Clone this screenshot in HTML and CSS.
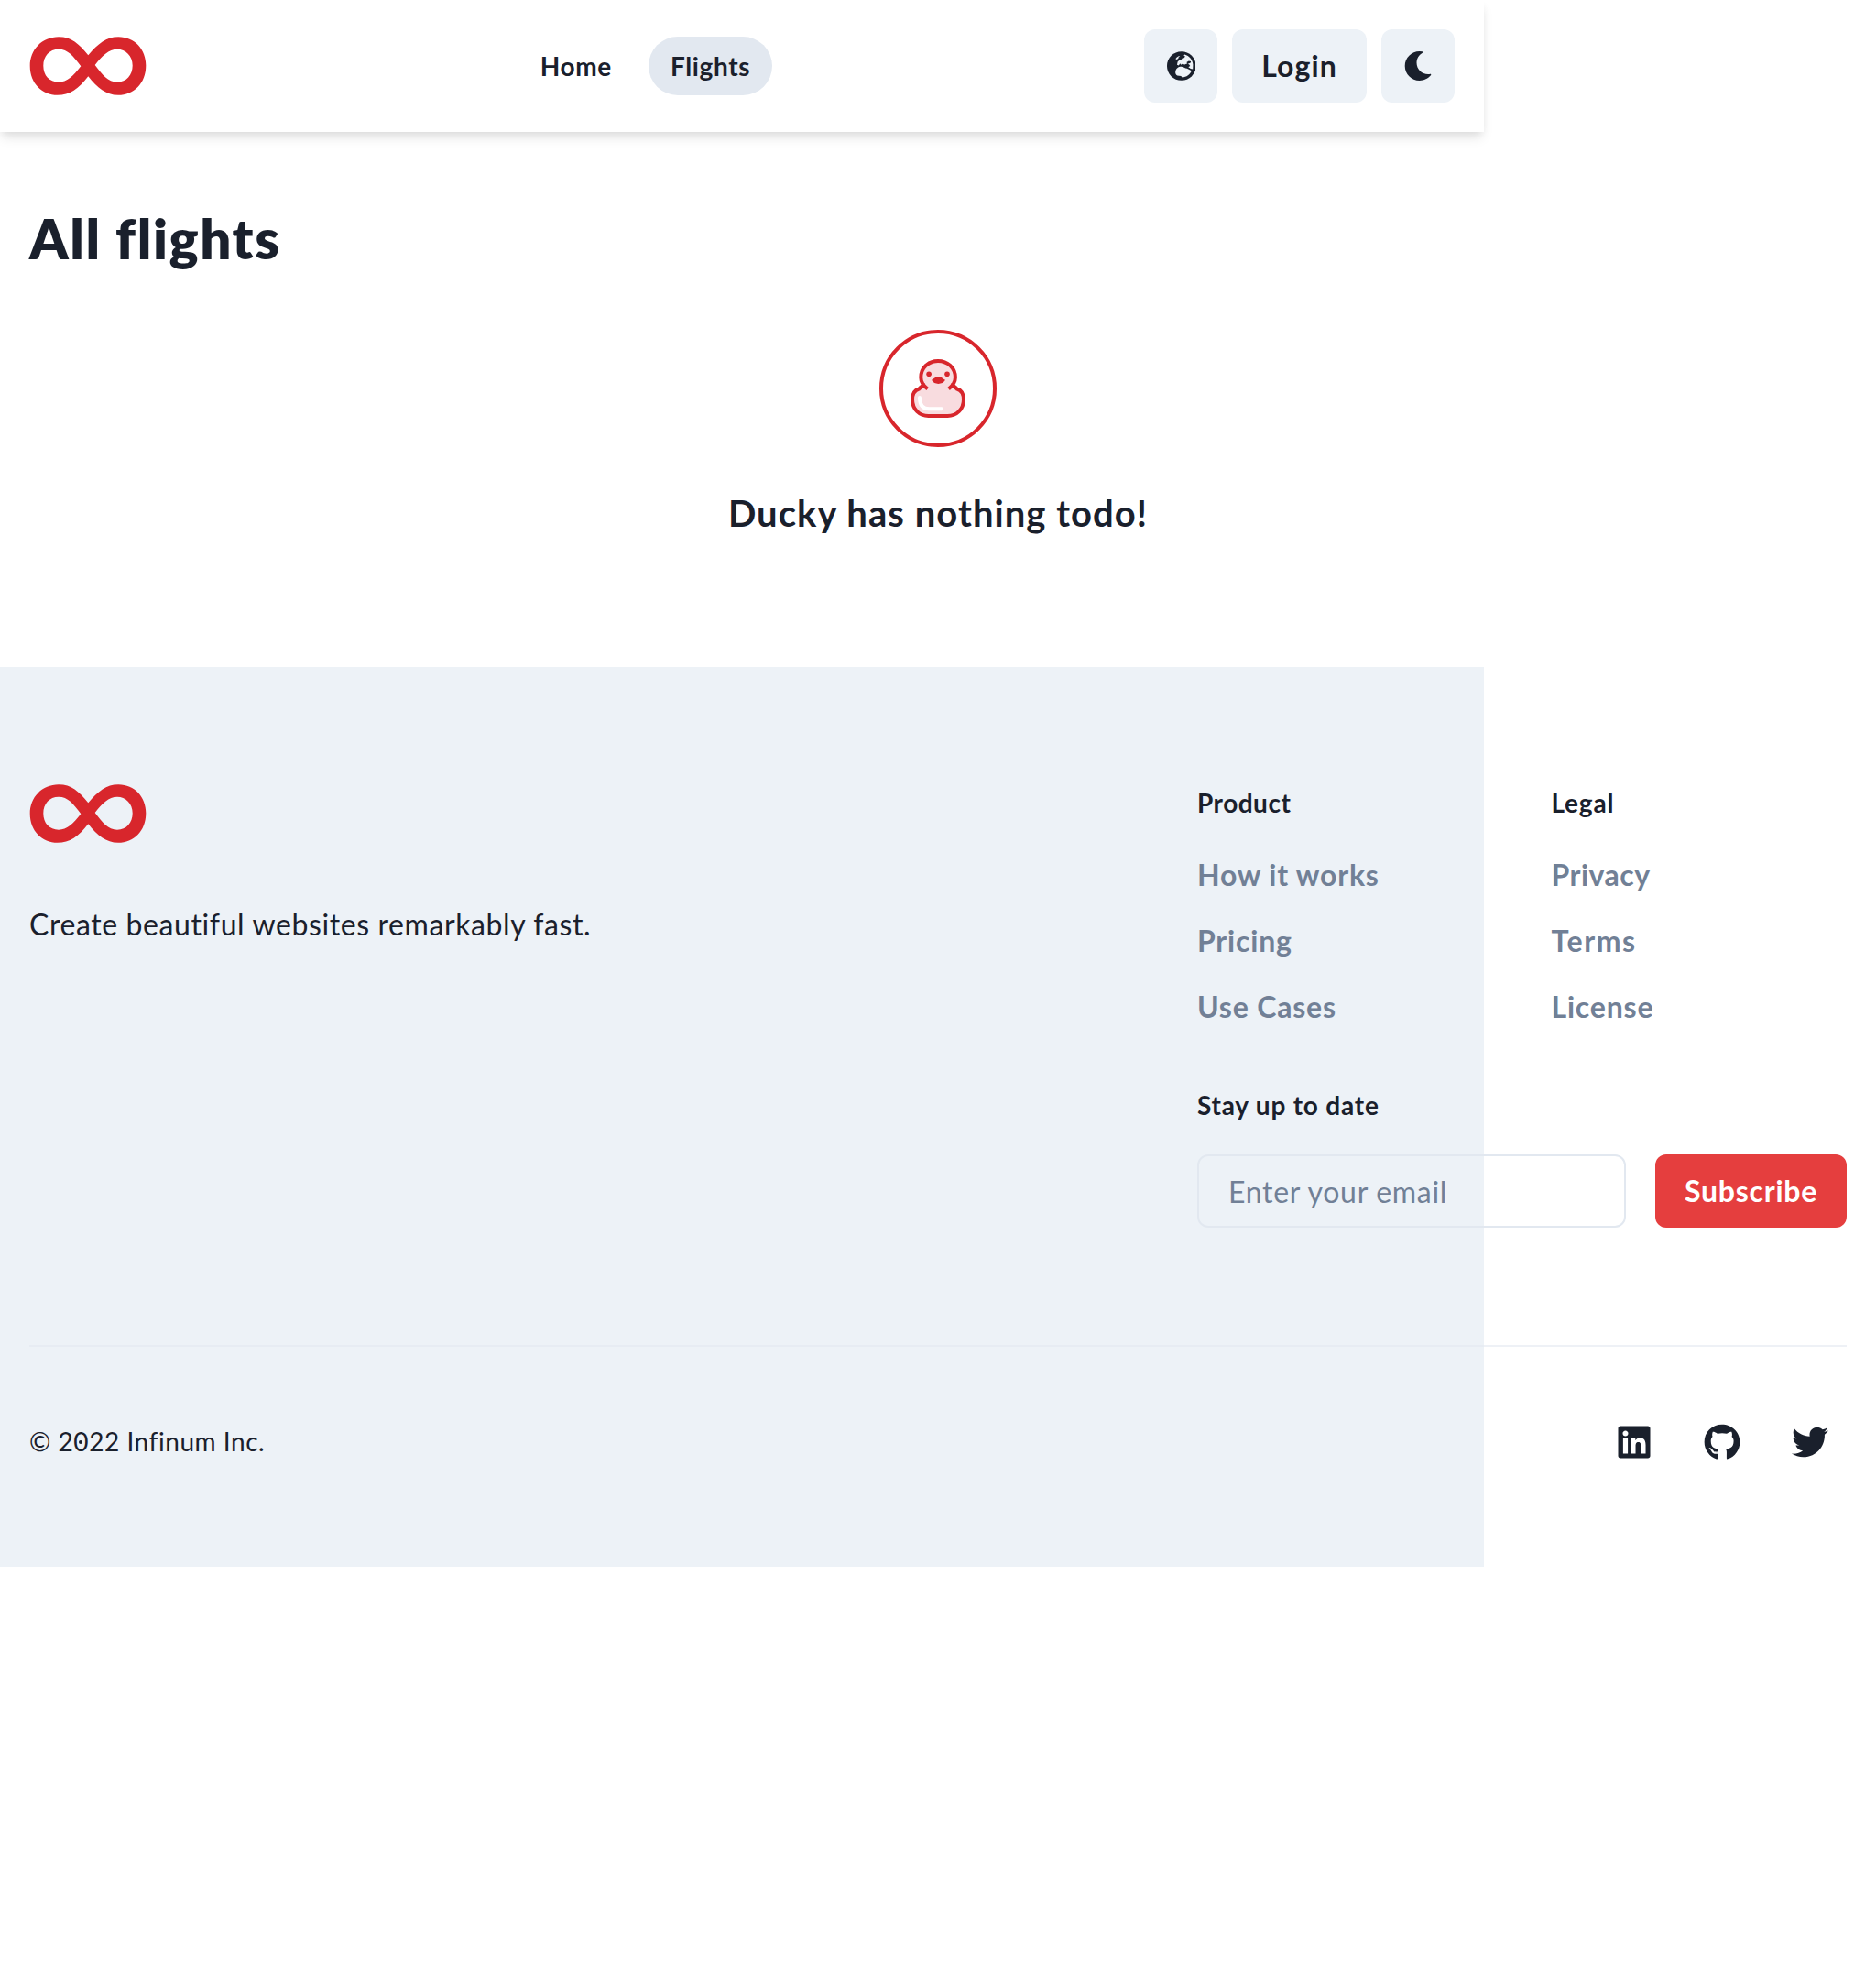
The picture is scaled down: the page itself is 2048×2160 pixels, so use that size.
FILE: index.html
```
<!DOCTYPE html>
<html lang="en">
<head>
<meta charset="utf-8">
<title>All flights</title>
<link rel="stylesheet" href="styles.css">
</head>
<body>
<svg class="sprite" aria-hidden="true">
  <symbol id="logo" viewBox="0 0 128 64">
    <path fill="#d8262c" fill-rule="evenodd" d="M64.3 20.3C54 7.6 46 .2 32 .2 14 .2 .7 14 .7 32c0 19 13.3 31.8 30 31.8 13.300 0 23.300-6.800 33.600-20.500C74 56 84 63.800 97 63.800c17 0 30.300-12.800 30.300-32.300C127.300 14 115 .2 97.300 .2 84 .2 75 7.600 64.300 20.300ZM56.300 32.300C48 21 42 13.700 32 13.700S15.300 21 15.300 31.800 22 49.700 32 49.700C41 49.700 48 43 56.300 32.300ZM71.700 31C79 21 87 13.700 96 13.700S112.700 21 112.700 31.500 106 49.700 96 49.700 79.500 41.500 71.700 31Z"/>
  </symbol>
</svg>

<header class="header">
  <a class="logo-link" href="#"><svg class="logo"><use href="#logo"/></svg></a>
  <nav class="nav">
    <a class="nav-link" href="#">Home</a>
    <a class="nav-link nav-link-active" href="#">Flights</a>
  </nav>
  <div class="actions">
    <button class="btn btn-icon" aria-label="Language">
      <svg class="icon-32" viewBox="-0.8 0 32 32">
        <circle cx="16" cy="16" r="15.800" fill="#1a202c"/>
        <g fill="#edf2f7">
          <path d="M11.200 14.800 11.800 11.500 13.500 9.800 15.500 9.500 17 7.500 19 7.300 20 5.500 18.500 4.500 19.500 3.600C24.500 5 28.200 9.400 28.600 14.500L28.400 19.500 26 19 23.500 17.200 25.500 16 24.500 14.600 23 13.800 26 12.500 26.300 11 24 10.500 21.500 12 22.500 13.300 19.500 14.500 17 13.700 15.500 14.800 14.500 13.300 13 15.500Z"/>
          <path d="M9.500 8.200 11 6.500 13 5.200 14.500 5.400 12.800 6.600 12.600 7.800 11 8.900Z"/>
          <path d="M9.400 22.500C9.800 18.500 12.500 16.700 16 16.700 18.500 17 19.500 18.500 22 18.800L27 21.300C25.500 25.500 21.500 28.300 16.800 28.600L15.500 27 11.500 26.500C9.800 25.500 9.300 24.200 9.400 22.500Z"/>
        </g>
      </svg>
    </button>
    <button class="btn btn-login">Login</button>
    <button class="btn btn-icon" aria-label="Dark mode">
      <svg class="icon-32" viewBox="0 0 512 512" fill="currentColor"><path d="M283.211 512c78.962 0 151.079-35.925 198.857-94.792 7.068-8.708-.639-21.430-11.562-19.350-124.203 23.654-238.262-71.576-238.262-196.954 0-72.222 38.662-138.635 101.498-174.394 9.686-5.512 7.250-20.197-3.756-22.230A258.156 258.156 0 0 0 283.211 0c-141.309 0-256 114.511-256 256 0 141.309 114.511 256 256 256z"/></svg>
    </button>
  </div>
</header>

<main class="main">
  <h1 class="title">All flights</h1>
  <section class="empty">
    <svg class="duck" viewBox="0 0 128 128" fill="none">
      <circle cx="64" cy="64" r="62" stroke="#d8262c" stroke-width="4"/>
      <g fill="#f8dcdf" stroke="#d8262c" stroke-width="4">
        <path d="M50 60.200C46.500 60.800 44.800 62.500 43.300 64.500 38.200 66 36 70 36 76 36 87 44 94 53.500 94H74.500C84 94 92 87 92 76 92 70 89.800 66 84.700 64.500 83.200 62.500 81.500 60.800 78 60.200Z" stroke="none"/>
        <path d="M52.600 64.500C48 61 45.300 57 45.300 52 45.300 41.500 53.500 34 64 34S82.900 41.500 82.900 52C82.900 57 80 61 75.600 64.500"/>
        <path fill="none" d="M50 60.200C46.500 60.800 44.800 62.500 43.300 64.500 38.200 66 36 70 36 76 36 87 44 94 53.500 94H74.500C84 94 92 87 92 76 92 70 89.800 66 84.700 64.500 83.200 62.500 81.500 60.800 78 60.200"/>
      </g>
      <path d="M44 74C44 82.500 48 86.300 54.500 86.300H68" stroke="#fff" stroke-width="4" stroke-linecap="round"/>
      <g fill="#d8262c">
        <circle cx="54.100" cy="48.300" r="2.800"/>
        <circle cx="74" cy="48.300" r="2.800"/>
        <path d="M57 54.800C59.500 53.500 61 50.900 64.400 50.900S69.500 53.500 72 54.800C70.500 57.700 67.500 58.900 64.400 58.900S58.500 57.700 57 54.800Z"/>
      </g>
    </svg>
    <h2 class="empty-title">Ducky has nothing todo!</h2>
  </section>
</main>

<footer class="footer">
  <div class="footer-inner">
    <div class="footer-top">
      <div class="brand">
        <svg class="logo"><use href="#logo"/></svg>
        <p class="tagline">Create beautiful websites remarkably fast.</p>
      </div>
      <div class="footer-side">
        <div class="columns">
          <div class="column">
            <h3 class="label label-product">Product</h3>
            <div class="links"><a href="#">How it works</a><a href="#">Pricing</a><a href="#">Use Cases</a></div>
          </div>
          <div class="column">
            <h3 class="label">Legal</h3>
            <div class="links"><a class="link-privacy" href="#">Privacy</a><a class="link-terms" href="#">Terms</a><a href="#">License</a></div>
          </div>
        </div>
        <div class="column">
          <h3 class="label">Stay up to date</h3>
          <form class="form">
            <input class="input" type="email" placeholder="Enter your email">
            <button class="btn btn-subscribe" type="button">Subscribe</button>
          </form>
        </div>
      </div>
    </div>
    <hr class="divider">
    <div class="footer-bottom">
      <p class="copyright">© 2<span class="zero">0</span>22 Infinum Inc.</p>
      <div class="social">
        <a class="social-link" href="#" aria-label="LinkedIn"><svg class="icon-40" viewBox="0 0 448 512" fill="currentColor"><path d="M416 32H31.900C14.300 32 0 46.500 0 64.300v383.400C0 465.500 14.300 480 31.900 480H416c17.600 0 32-14.500 32-32.300V64.300c0-17.800-14.400-32.300-32-32.300zM135.400 416H69V202.200h66.500V416zm-33.200-243c-21.300 0-38.500-17.300-38.500-38.500S80.900 96 102.200 96c21.200 0 38.500 17.300 38.500 38.500 0 21.300-17.200 38.500-38.500 38.500zm282.100 243h-66.400V312c0-24.800-.5-56.700-34.500-56.700-34.600 0-39.900 27-39.900 54.900V416h-66.400V202.200h63.700v29.200h.9c8.900-16.800 30.600-34.500 62.900-34.500 67.200 0 79.700 44.300 79.700 101.900V416z"/></svg></a>
        <a class="social-link" href="#" aria-label="GitHub"><svg class="icon-40" viewBox="0 0 496 512" fill="currentColor"><path d="M165.900 397.400c0 2-2.300 3.600-5.200 3.600-3.300.3-5.600-1.300-5.600-3.600 0-2 2.300-3.600 5.200-3.600 3-.3 5.600 1.300 5.600 3.600zm-31.100-4.500c-.7 2 1.300 4.300 4.300 4.900 2.600 1 5.600 0 6.200-2s-1.300-4.300-4.300-5.200c-2.600-.7-5.500.3-6.200 2.300zm44.200-1.700c-2.900.7-4.900 2.600-4.600 4.900.3 2 2.900 3.300 5.900 2.600 2.900-.7 4.900-2.600 4.600-4.600-.3-1.900-3-3.200-5.900-2.900zM244.800 8C106.100 8 0 113.300 0 252c0 110.900 69.800 205.800 169.500 239.200 12.800 2.300 17.300-5.600 17.300-12.100 0-6.200-.3-40.400-.3-61.400 0 0-70 15-84.700-29.800 0 0-11.400-29.100-27.800-36.600 0 0-22.900-15.700 1.600-15.400 0 0 24.900 2 38.600 25.800 21.900 38.600 58.600 27.500 72.900 20.900 2.300-16 8.800-27.100 16-33.700-55.900-6.200-112.300-14.300-112.300-110.500 0-27.500 7.600-41.300 23.600-58.900-2.600-6.500-11.100-33.300 2.600-67.900 20.900-6.500 69 27 69 27 20-5.600 41.500-8.500 62.800-8.500s42.800 2.900 62.800 8.500c0 0 48.100-33.600 69-27 13.700 34.700 5.200 61.400 2.600 67.900 16 17.700 25.800 31.500 25.800 58.900 0 96.500-58.900 104.200-114.800 110.500 9.200 7.900 17 22.900 17 46.400 0 33.700-.3 75.400-.3 83.600 0 6.500 4.600 14.400 17.300 12.100C428.200 457.800 496 362.900 496 252 496 113.300 383.500 8 244.800 8z"/></svg></a>
        <a class="social-link" href="#" aria-label="Twitter"><svg class="icon-40" viewBox="0 0 512 512" fill="currentColor"><path d="M459.370 151.716c.325 4.548.325 9.097.325 13.645 0 138.720-105.583 298.558-298.558 298.558-59.452 0-114.680-17.219-161.137-47.106 8.447.974 16.568 1.299 25.340 1.299 49.055 0 94.213-16.568 130.274-44.832-46.132-.975-84.792-31.188-98.112-72.772 6.498.974 12.995 1.624 19.818 1.624 9.421 0 18.843-1.300 27.614-3.573-48.081-9.747-84.143-51.980-84.143-102.985v-1.299c13.969 7.797 30.214 12.670 47.431 13.319-28.264-18.843-46.781-51.005-46.781-87.391 0-19.492 5.197-37.360 14.294-52.954 51.655 63.675 129.300 105.258 216.365 109.807-1.624-7.797-2.599-15.918-2.599-24.040 0-57.828 46.782-104.934 104.934-104.934 30.213 0 57.502 12.670 76.670 33.137 23.715-4.548 46.456-13.320 66.599-25.340-7.798 24.366-24.366 44.833-46.132 57.827 21.117-2.273 41.584-8.122 60.426-16.243-14.292 20.791-32.161 39.308-52.628 54.253z"/></svg></a>
      </div>
    </div>
  </div>
</footer>
</body>
</html>
```
FILE: styles.css
```
* {
  box-sizing: border-box;
  margin: 0;
}

body {
  background: #fff;
  color: #1a202c;
  font-family: Lato, "Liberation Sans", sans-serif;
  font-size: 32px;
  line-height: 48px;
  letter-spacing: 0.6px;
  font-variant-ligatures: none;
}

a {
  color: inherit;
  text-decoration: none;
}

.sprite {
  display: none;
}

.logo {
  display: block;
  width: 128px;
  height: 64px;
}

.icon-32 {
  width: 32px;
  height: 32px;
}

.icon-40 {
  width: 40px;
  height: 40px;
}

/* Header */

.header {
  display: flex;
  align-items: center;
  justify-content: space-between;
  width: 1620px;
  height: 144px;
  padding: 0 32px;
  background: #fff;
  box-shadow: 0 8px 12px -2px rgba(0, 0, 0, 0.1), 0 4px 8px -2px rgba(0, 0, 0, 0.06);
}

.nav {
  display: flex;
  gap: 16px;
}

.nav-link {
  height: 64px;
  padding: 0 24px;
  border-radius: 32px;
  font-size: 28px;
  font-weight: 700;
  line-height: 65px;
  letter-spacing: 0.65px;
}

.nav-link-active {
  background: #e2e8f0;
}

.actions {
  display: flex;
  gap: 16px;
}

.btn {
  display: flex;
  align-items: center;
  justify-content: center;
  height: 80px;
  padding: 0;
  border: 0;
  border-radius: 12px;
  background: #edf2f7;
  color: inherit;
  font: inherit;
  font-weight: 700;
}

.btn-icon {
  width: 80px;
}

.btn-login {
  width: 147px;
  letter-spacing: 1.1px;
}

/* Main */

.main {
  height: 584px;
  padding: 76px 32px 0;
}

.title {
  font-size: 60px;
  font-weight: 800;
  line-height: 80px;
  letter-spacing: 1.6px;
}

.empty {
  display: flex;
  flex-direction: column;
  align-items: center;
  gap: 48px;
  width: 1984px;
  padding-top: 60px;
}

.duck {
  width: 128px;
  height: 128px;
}

.empty-title {
  font-size: 40px;
  font-weight: 700;
  line-height: 48px;
  letter-spacing: 1.05px;
}

/* Footer */

.footer {
  width: 1620px;
  height: 982px;
  padding: 128px 32px 0;
  background: #edf2f7;
}

.footer-inner {
  width: 1984px;
}

.footer-top {
  display: flex;
  justify-content: space-between;
}

.brand {
  display: flex;
  flex-direction: column;
  gap: 65px;
}

.footer-side {
  display: flex;
  flex-direction: column;
  gap: 64px;
  width: 709px;
}

.columns {
  display: grid;
  grid-template-columns: 1fr 1fr;
  gap: 64px;
}

.column {
  display: flex;
  flex-direction: column;
  gap: 36px;
}

.label {
  height: 38px;
  font-size: 28px;
  font-weight: 700;
  line-height: 40px;
  letter-spacing: 0.8px;
}

.label-product {
  letter-spacing: 0.5px;
}

.links {
  display: flex;
  flex-direction: column;
  gap: 24px;
  color: #718096;
  font-weight: 700;
  letter-spacing: 0.8px;
}

.links a {
  height: 48px;
  line-height: 50px;
}

.link-privacy {
  letter-spacing: 0.5px;
}

.link-terms {
  letter-spacing: 1.6px;
}

.form {
  display: flex;
  gap: 32px;
}

.input {
  flex: 1;
  min-width: 0;
  height: 80px;
  padding: 0 32px;
  border: 2px solid #e2e8f0;
  border-radius: 12px;
  background: transparent;
  font: inherit;
  letter-spacing: 0.7px;
}

.input::placeholder {
  color: #718096;
  opacity: 1;
}

.btn-subscribe {
  width: 209px;
  background: #e53e3e;
  color: #fff;
  letter-spacing: 0.75px;
}

.divider {
  height: 2px;
  margin-top: 128px;
  border: 0;
  background: #e2e8f0;
  opacity: 0.6;
}

.footer-bottom {
  display: flex;
  align-items: center;
  justify-content: space-between;
  padding-top: 64px;
}

.copyright {
  padding-bottom: 3px;
  font-size: 28px;
  letter-spacing: 0.55px;
}

/* Dotted zero */
.zero {
  position: relative;
}

.zero::after {
  content: "";
  position: absolute;
  top: 50%;
  left: 50%;
  width: 4px;
  height: 4px;
  margin: -1px 0 0 -2.300px;
  border-radius: 50%;
  background: currentColor;
}

.social {
  display: flex;
  gap: 16px;
}

.social-link {
  display: flex;
  align-items: center;
  justify-content: center;
  width: 80px;
  height: 80px;
}
```
